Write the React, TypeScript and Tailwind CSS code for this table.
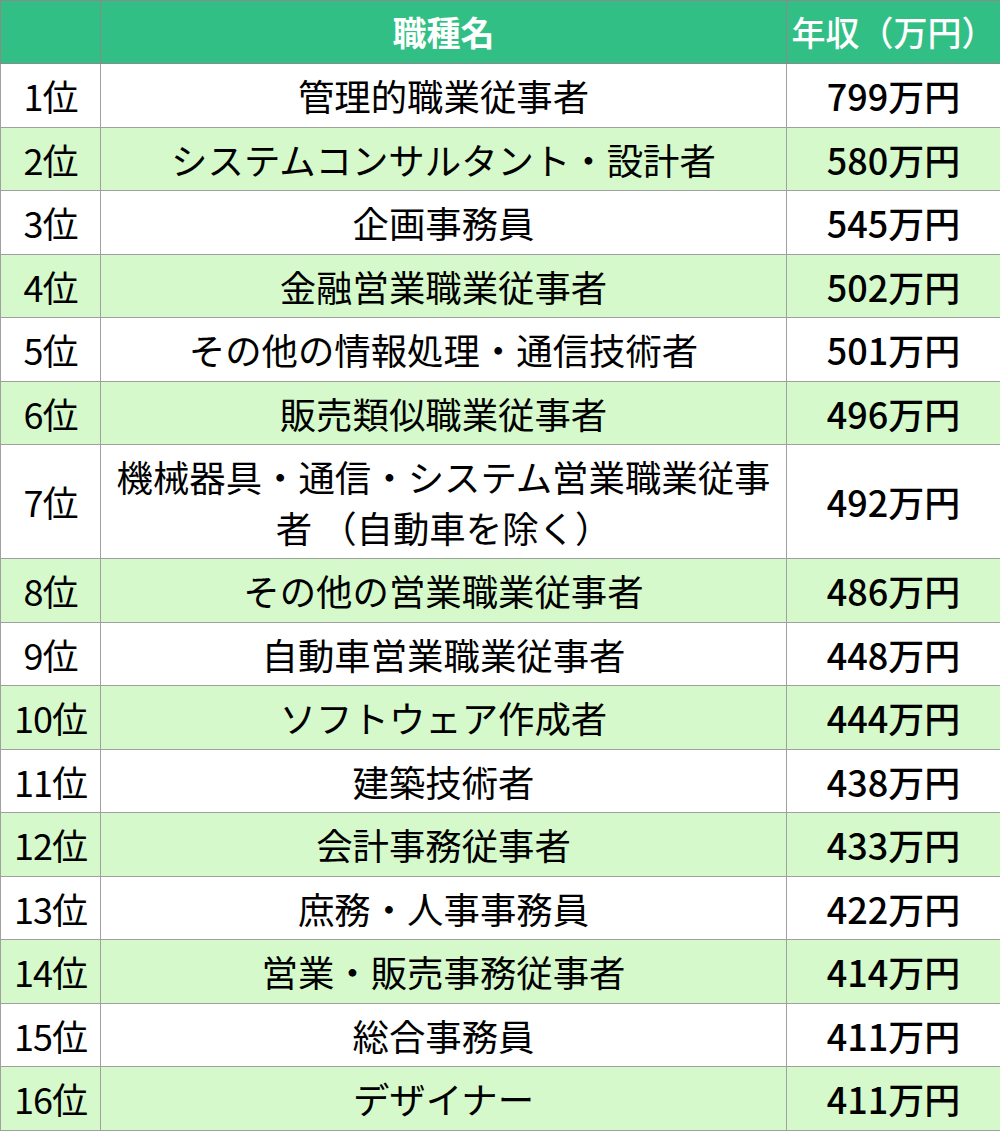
import React from "react";

const rows: [string, string, string][] = [
  ["1位", "管理的職業従事者", "799万円"],
  ["2位", "システムコンサルタント・設計者", "580万円"],
  ["3位", "企画事務員", "545万円"],
  ["4位", "金融営業職業従事者", "502万円"],
  ["5位", "その他の情報処理・通信技術者", "501万円"],
  ["6位", "販売類似職業従事者", "496万円"],
  ["7位", "機械器具・通信・システム営業職業従事者 （自動車を除く）", "492万円"],
  ["8位", "その他の営業職業従事者", "486万円"],
  ["9位", "自動車営業職業従事者", "448万円"],
  ["10位", "ソフトウェア作成者", "444万円"],
  ["11位", "建築技術者", "438万円"],
  ["12位", "会計事務従事者", "433万円"],
  ["13位", "庶務・人事事務員", "422万円"],
  ["14位", "営業・販売事務従事者", "414万円"],
  ["15位", "総合事務員", "411万円"],
  ["16位", "デザイナー", "411万円"],
];

export default function App() {
  return (
    <div
      className="w-[1000px] bg-white text-black"
      style={{ fontFamily: '"Noto Sans CJK JP", "Noto Sans", sans-serif' }}
    >
      <table className="w-[1000px] table-fixed border-collapse">
        <colgroup>
          <col className="w-[100px]" />
          <col className="w-[686px]" />
          <col className="w-[214px]" />
        </colgroup>
        <thead>
          <tr className="bg-[#32bf85] text-white">
            <th className="h-[63px] border border-[#8a8a8a] p-0"></th>
            <th className="h-[63px] border border-[#8a8a8a] p-0 text-[34px] font-bold leading-[50px] text-center">
              職種名
            </th>
            <th className="h-[63px] border border-[#8a8a8a] p-0 text-[34px] font-medium leading-[50px] text-center whitespace-nowrap">
              年収（万円）
            </th>
          </tr>
        </thead>
        <tbody>
          {rows.map(([rank, name, pay], i) => (
            <tr key={rank} className={i % 2 === 1 ? "bg-[#d5f9ca]" : "bg-white"}>
              <td className="border border-[#a0a0a0] px-0 py-[6px] text-center text-[36px] leading-[50.5px] tracking-[-1px]">
                {rank}
              </td>
              <td className="border border-[#a0a0a0] px-[8px] py-[6px] text-center text-[36.4px] leading-[50.5px]">
                {name}
              </td>
              <td className="border border-[#a0a0a0] px-0 py-[6px] text-center text-[36px] font-medium leading-[50.5px]">
                {pay}
              </td>
            </tr>
          ))}
        </tbody>
      </table>
    </div>
  );
}
